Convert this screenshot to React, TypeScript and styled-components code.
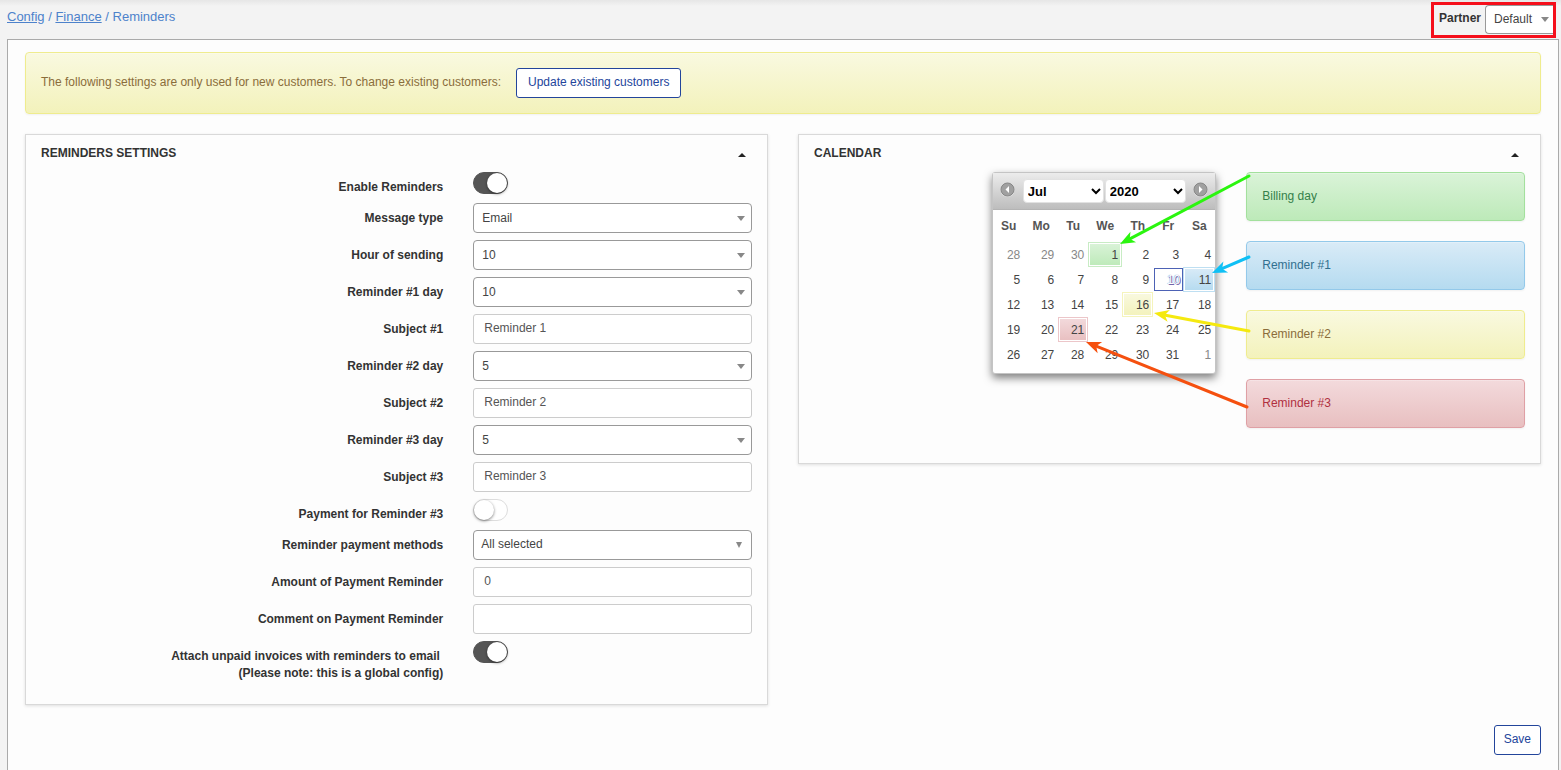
import React, { useId, useState } from 'react';
import styled, { createGlobalStyle, css } from 'styled-components';

const GlobalStyle = createGlobalStyle`
  *, *::before, *::after { box-sizing: border-box; }
  body {
    margin: 0;
    background: #f3f3f3;
    color: #333;
    font: 12px/17px "Liberation Sans", Arial, sans-serif;
  }
  button, input, select { font: inherit; color: inherit; margin: 0; }
`;

const Page = styled.div`
  display: flex;
  flex-direction: column;
  min-height: 100vh;
  padding: 0 2px 0 7px;
  background: linear-gradient(#e6e6e6, #f3f3f3 6px);
`;

const TopBar = styled.header`
  display: flex;
  justify-content: space-between;
  align-items: flex-start;
  padding: 2px 3px 1px 0;
`;

const Breadcrumb = styled.nav`
  padding-top: 6px;
  font-size: 13px;
  color: #4d82cb;
  a { color: inherit; }
`;

const PartnerBox = styled.div`
  display: flex;
  align-items: flex-start;
  width: 125px;
  height: 36px;
  border: 3px solid #f50f1b;
`;

const PartnerLabel = styled.label`
  flex: 1;
  padding: 5px 0 0 5px;
  font-weight: bold;
`;

const Main = styled.main`
  flex: 1;
  padding: 12px 17px 15px;
  background: #fdfdfd;
  border: 1px solid #aaa;
  border-bottom: 0;
`;

const tones = {
  green: { top: '#daf3d8', bottom: '#bdeab9', border: '#a3e09d', text: '#34804a' },
  blue: { top: '#d9ebf7', bottom: '#b5dbf0', border: '#93c9ea', text: '#31708f' },
  yellow: { top: '#f9f9e0', bottom: '#f3f2bb', border: '#efec8e', text: '#8a6d3b' },
  red: { top: '#f3dadc', bottom: '#e8bfc0', border: '#dfa0a5', text: '#b0303f' },
};
type Tone = keyof typeof tones;

const Alert = styled.div<{ $tone: Tone }>`
  display: flex;
  align-items: flex-start;
  gap: 15px;
  padding: 15px;
  border: 1px solid ${p => tones[p.$tone].border};
  border-radius: 4px;
  background: linear-gradient(${p => tones[p.$tone].top}, ${p => tones[p.$tone].bottom});
  color: ${p => tones[p.$tone].text};
  box-shadow: inset 0 1px 0 rgba(255, 255, 255, 0.25), 0 1px 2px rgba(0, 0, 0, 0.05);
`;

const AlertText = styled.span`
  padding-top: 6px;
`;

const Button = styled.button<{ $wide?: boolean }>`
  height: 30px;
  padding: 0 ${p => (p.$wide ? 11 : 9)}px 2px;
  border: 1px solid #23459b;
  border-radius: 3px;
  background: #fff;
  color: #23459b;
`;

const Columns = styled.div`
  display: grid;
  grid-template-columns: 1fr 1fr;
  align-items: start;
  gap: 30px;
  margin: 20px 0;
`;

const Panel = styled.section`
  padding-bottom: 15px;
  border: 1px solid #d9d9d9;
  background: #fdfdfd;
  box-shadow: 0 1px 3px rgba(0, 0, 0, 0.12);
`;

const PanelHeader = styled.header`
  display: flex;
  justify-content: space-between;
  align-items: flex-start;
  height: 37px;
  padding: 10px 21px 0 15px;
`;

const PanelTitle = styled.h2`
  margin: 0;
  font-size: 12px;
  line-height: 17px;
`;

const CollapseButton = styled.button`
  display: flex;
  padding: 8px 0 0;
  border: 0;
  background: none;
  svg { display: block; }
`;

const Row = styled.div`
  display: grid;
  grid-template-columns: 7fr 5fr;
  align-items: start;
  margin-bottom: 7px;
`;

const RowLabel = styled.label`
  padding: 7px 15px 0;
  text-align: right;
  font-weight: bold;
`;

const RowField = styled.div`
  display: grid;
  padding: 0 15px;
`;

const TextInput = styled.input`
  width: 100%;
  height: 30px;
  padding: 0 10px 2px;
  border: 1px solid #ccc;
  border-radius: 3px;
  background: #fff;
  color: #555;
`;

const SelectShell = styled.span`
  display: grid;
  align-items: center;
  > * { grid-area: 1 / 1; }
  > svg { justify-self: end; margin-right: 6px; pointer-events: none; }
`;

const PartnerShell = styled(SelectShell)`
  > svg { margin-right: 3px; }
`;

const SelectControl = styled.select<{ $clipped?: boolean; $multi?: boolean }>`
  appearance: none;
  width: 100%;
  height: 30px;
  padding: 0 24px 0 8px;
  border: 1px solid #999;
  border-radius: 4px;
  background: #fff;
  color: #444;
  ${p => p.$multi && css`padding: 0 24px 2px 7px;`}
  ${p => p.$clipped && css`
    width: 68px;
    height: 29px;
    padding-right: 14px;
    border-width: 1px 0 1px 1px;
    border-radius: 4px 0 0 4px;
  `}
`;

const Toggle = styled.input`
  appearance: none;
  display: flex;
  width: 35px;
  height: 22px;
  border: 1px solid #ddd;
  border-radius: 11px;
  background: #fff;
  &::before {
    content: "";
    width: 20px;
    height: 20px;
    border-radius: 50%;
    background: #fff;
    box-shadow: 0 1px 3px rgba(0, 0, 0, 0.5);
  }
  &:checked {
    justify-content: flex-end;
    border-color: #555;
    background: #555;
  }
`;

const CalendarCell = styled.div`
  display: flex;
  justify-content: flex-end;
  padding: 0 15px;
`;

const CalendarBox = styled.div`
  position: relative;
  width: 224px;
  height: 202px;
  border: 1px solid #c4c4c4;
  border-radius: 3px;
  background: #fff;
  box-shadow: 0 4px 9px rgba(0, 0, 0, 0.5);
`;

const CalendarHead = styled.div`
  display: flex;
  align-items: center;
  justify-content: space-between;
  height: 37px;
  padding: 0 7px;
  border-bottom: 1px solid #b4b4b4;
  background: linear-gradient(#ececec, #bdbdbd);
`;

const MonthPickers = styled.div`
  display: flex;
  gap: 1px;
`;

const MonthButton = styled.button`
  display: flex;
  padding: 0 0 3px;
  border: 0;
  background: none;
`;

const MonthSelect = styled.select`
  appearance: none;
  width: 81px;
  height: 24px;
  padding: 0 4px;
  border: 1px solid #e2e2e2;
  border-radius: 4px;
  background: #fff;
  color: #000;
  font-size: 13px;
  font-weight: bold;
`;

const MonthShell = styled(SelectShell)`
  > svg { margin-right: 2px; }
`;

const Days = styled.table`
  width: 222px;
  table-layout: fixed;
  border-collapse: separate;
  border-spacing: 0;
  color: #444;
  th { height: 32px; padding: 0; font-weight: bold; color: #555; }
`;

const Day = styled.td<{ $tone?: Tone; $outside?: boolean; $today?: boolean }>`
  height: 25px;
  padding: 2px 3px 0 0;
  border: 1px solid transparent;
  text-align: right;
  ${p => p.$outside && css`color: #888;`}
  ${p => p.$tone && css`
    border-color: ${tones[p.$tone].border}99;
    background: linear-gradient(${tones[p.$tone].top}, ${tones[p.$tone].bottom}) padding-box;
    box-shadow: inset 0 0 0 1px #fff;
  `}
  ${p => p.$today && css`
    padding: 1px 0 1px 1px;
    border: 0;
    color: #fff;
    text-shadow: 0 0 1px #35a, 1px 1px 0 #76a;
    span {
      display: block;
      padding: 3px 2px 1px;
      border: 1px solid #4d62b5;
    }
  `}
`;

const Legend = styled.div`
  display: grid;
  gap: 20px;
  padding: 0 15px;
  margin-bottom: 13px;
`;

const Arrows = styled.svg`
  position: absolute;
  top: -1px;
  left: -1px;
  overflow: visible;
  pointer-events: none;
`;

const Footer = styled.footer`
  display: flex;
  justify-content: flex-end;
`;

const DownCaret = ({ narrow }: { narrow?: boolean }) =>
  narrow ? (
    <svg width="12" height="6" viewBox="0 0 12 6"><path d="M2 0h6L5 6z" fill="#888" /></svg>
  ) : (
    <svg width="10" height="5" viewBox="0 0 10 5"><path d="M1 0h8L5 5z" fill="#888" /></svg>
  );

const Chevron = () => (
  <svg width="12" height="8" viewBox="0 0 12 8">
    <path d="M2 2l4 4 4-4" fill="none" stroke="#000" strokeWidth="2" />
  </svg>
);

const MonthIcon = ({ next }: { next?: boolean }) => (
  <svg width="15" height="15" viewBox="0 0 15 15">
    <circle cx="7.5" cy="8" r="7" fill="#e2e2e2" />
    <circle cx="7.5" cy="7.5" r="6.5" fill="#a0a0a0" stroke="#868686" />
    <path d={next ? 'M6 4v7l3.5-3.5z' : 'M9 4v7L5.5 7.5z'} fill="#fff" />
  </svg>
);

const Arrow = ({ from, to, color }: { from: [number, number]; to: [number, number]; color: string }) => {
  const dx = from[0] - to[0];
  const dy = from[1] - to[1];
  const length = Math.hypot(dx, dy);
  const angle = (Math.atan2(dy, dx) * 180) / Math.PI;
  return (
    <g transform={`translate(${to[0]} ${to[1]}) rotate(${angle})`}>
      <path d={`M9 0H${length}`} stroke={color} strokeWidth="3" strokeLinecap="round" />
      <path d="M0 0L15 -6L11 0L15 6z" fill={color} />
    </g>
  );
};

type Field = { label: React.ReactNode; kind: 'toggle' | 'select' | 'multi' | 'text'; value?: string; on?: boolean };

const fields: Field[] = [
  { label: 'Enable Reminders', kind: 'toggle', on: true },
  { label: 'Message type', kind: 'select', value: 'Email' },
  { label: 'Hour of sending', kind: 'select', value: '10' },
  { label: 'Reminder #1 day', kind: 'select', value: '10' },
  { label: 'Subject #1', kind: 'text', value: 'Reminder 1' },
  { label: 'Reminder #2 day', kind: 'select', value: '5' },
  { label: 'Subject #2', kind: 'text', value: 'Reminder 2' },
  { label: 'Reminder #3 day', kind: 'select', value: '5' },
  { label: 'Subject #3', kind: 'text', value: 'Reminder 3' },
  { label: 'Payment for Reminder #3', kind: 'toggle', on: false },
  { label: 'Reminder payment methods', kind: 'multi', value: 'All selected' },
  { label: 'Amount of Payment Reminder', kind: 'text', value: '0' },
  { label: 'Comment on Payment Reminder', kind: 'text', value: '' },
  {
    label: <>Attach unpaid invoices with reminders to email&nbsp;<br />(Please note: this is a global config)</>,
    kind: 'toggle',
    on: true,
  },
];

const FieldRow = ({ label, kind, value, on }: Field) => {
  const id = useId();
  return (
    <Row>
      <RowLabel htmlFor={id}>{label}</RowLabel>
      <RowField>
        {kind === 'toggle' && <Toggle id={id} type="checkbox" defaultChecked={on} />}
        {kind === 'text' && <TextInput id={id} type="text" defaultValue={value} />}
        {(kind === 'select' || kind === 'multi') && (
          <SelectShell>
            <SelectControl id={id} $multi={kind === 'multi'}><option>{value}</option></SelectControl>
            <DownCaret narrow={kind === 'multi'} />
          </SelectShell>
        )}
      </RowField>
    </Row>
  );
};

const CollapsiblePanel = ({ title, children }: { title: string; children: React.ReactNode }) => {
  const [open, setOpen] = useState(true);
  return (
    <Panel>
      <PanelHeader>
        <PanelTitle>{title}</PanelTitle>
        <CollapseButton type="button" aria-label="Collapse" aria-expanded={open} onClick={() => setOpen(!open)}>
          <svg width="8" height="4" viewBox="0 0 8 4"><path d="M0 4L4 0l4 4z" fill="#222" /></svg>
        </CollapseButton>
      </PanelHeader>
      {open && children}
    </Panel>
  );
};

const weekdays: [string, number][] = [['Su', 31], ['Mo', 34], ['Tu', 30], ['We', 34], ['Th', 31], ['Fr', 30], ['Sa', 32]];
const weeks = [
  [28, 29, 30, 1, 2, 3, 4],
  [5, 6, 7, 8, 9, 10, 11],
  [12, 13, 14, 15, 16, 17, 18],
  [19, 20, 21, 22, 23, 24, 25],
  [26, 27, 28, 29, 30, 31, 1],
];
const marked: Record<number, Tone> = { 1: 'green', 11: 'blue', 16: 'yellow', 21: 'red' };

const Calendar = () => (
  <CalendarBox>
    <CalendarHead>
      <MonthButton type="button" aria-label="Previous month"><MonthIcon /></MonthButton>
      <MonthPickers>
        <MonthShell>
          <MonthSelect aria-label="Month"><option>Jul</option></MonthSelect>
          <Chevron />
        </MonthShell>
        <MonthShell>
          <MonthSelect aria-label="Year"><option>2020</option></MonthSelect>
          <Chevron />
        </MonthShell>
      </MonthPickers>
      <MonthButton type="button" aria-label="Next month"><MonthIcon next /></MonthButton>
    </CalendarHead>
    <Days>
      <colgroup>{weekdays.map(([name, width]) => <col key={name} width={width} />)}</colgroup>
      <thead>
        <tr>{weekdays.map(([name]) => <th key={name} scope="col">{name}</th>)}</tr>
      </thead>
      <tbody>
        {weeks.map((week, w) => (
          <tr key={w}>
            {week.map((day, d) => {
              const outside = (w === 0 && day > 7) || (w === 4 && day < 7);
              return (
                <Day key={d} $outside={outside} $today={day === 10} $tone={outside ? undefined : marked[day]}>
                  <span>{day}</span>
                </Day>
              );
            })}
          </tr>
        ))}
      </tbody>
    </Days>
    <Arrows width="260" height="240" aria-hidden="true">
      <Arrow from={[257, 4]} to={[128, 72]} color="#2bf50f" />
      <Arrow from={[257, 85]} to={[220, 101]} color="#0fc0f5" />
      <Arrow from={[257, 159]} to={[162, 141]} color="#f5e90f" />
      <Arrow from={[255, 235]} to={[94, 170]} color="#f5500f" />
    </Arrows>
  </CalendarBox>
);

export default function App() {
  return (
    <>
      <GlobalStyle />
      <Page>
        <TopBar>
          <Breadcrumb aria-label="Breadcrumb">
            <a href="#config">Config</a> / <a href="#finance">Finance</a> / Reminders
          </Breadcrumb>
          <PartnerBox>
            <PartnerLabel htmlFor="partner">Partner</PartnerLabel>
            <PartnerShell>
              <SelectControl id="partner" $clipped><option>Default</option></SelectControl>
              <DownCaret />
            </PartnerShell>
          </PartnerBox>
        </TopBar>
        <Main>
          <Alert $tone="yellow">
            <AlertText>
              The following settings are only used for new customers. To change existing customers:
            </AlertText>
            <Button type="button" $wide>Update existing customers</Button>
          </Alert>
          <Columns>
            <CollapsiblePanel title="REMINDERS SETTINGS">
              {fields.map((field, i) => <FieldRow key={i} {...field} />)}
            </CollapsiblePanel>
            <CollapsiblePanel title="CALENDAR">
              <Row>
                <CalendarCell><Calendar /></CalendarCell>
                <Legend>
                  <Alert $tone="green">Billing day</Alert>
                  <Alert $tone="blue">Reminder #1</Alert>
                  <Alert $tone="yellow">Reminder #2</Alert>
                  <Alert $tone="red">Reminder #3</Alert>
                </Legend>
              </Row>
            </CollapsiblePanel>
          </Columns>
          <Footer><Button type="button">Save</Button></Footer>
        </Main>
      </Page>
    </>
  );
}
